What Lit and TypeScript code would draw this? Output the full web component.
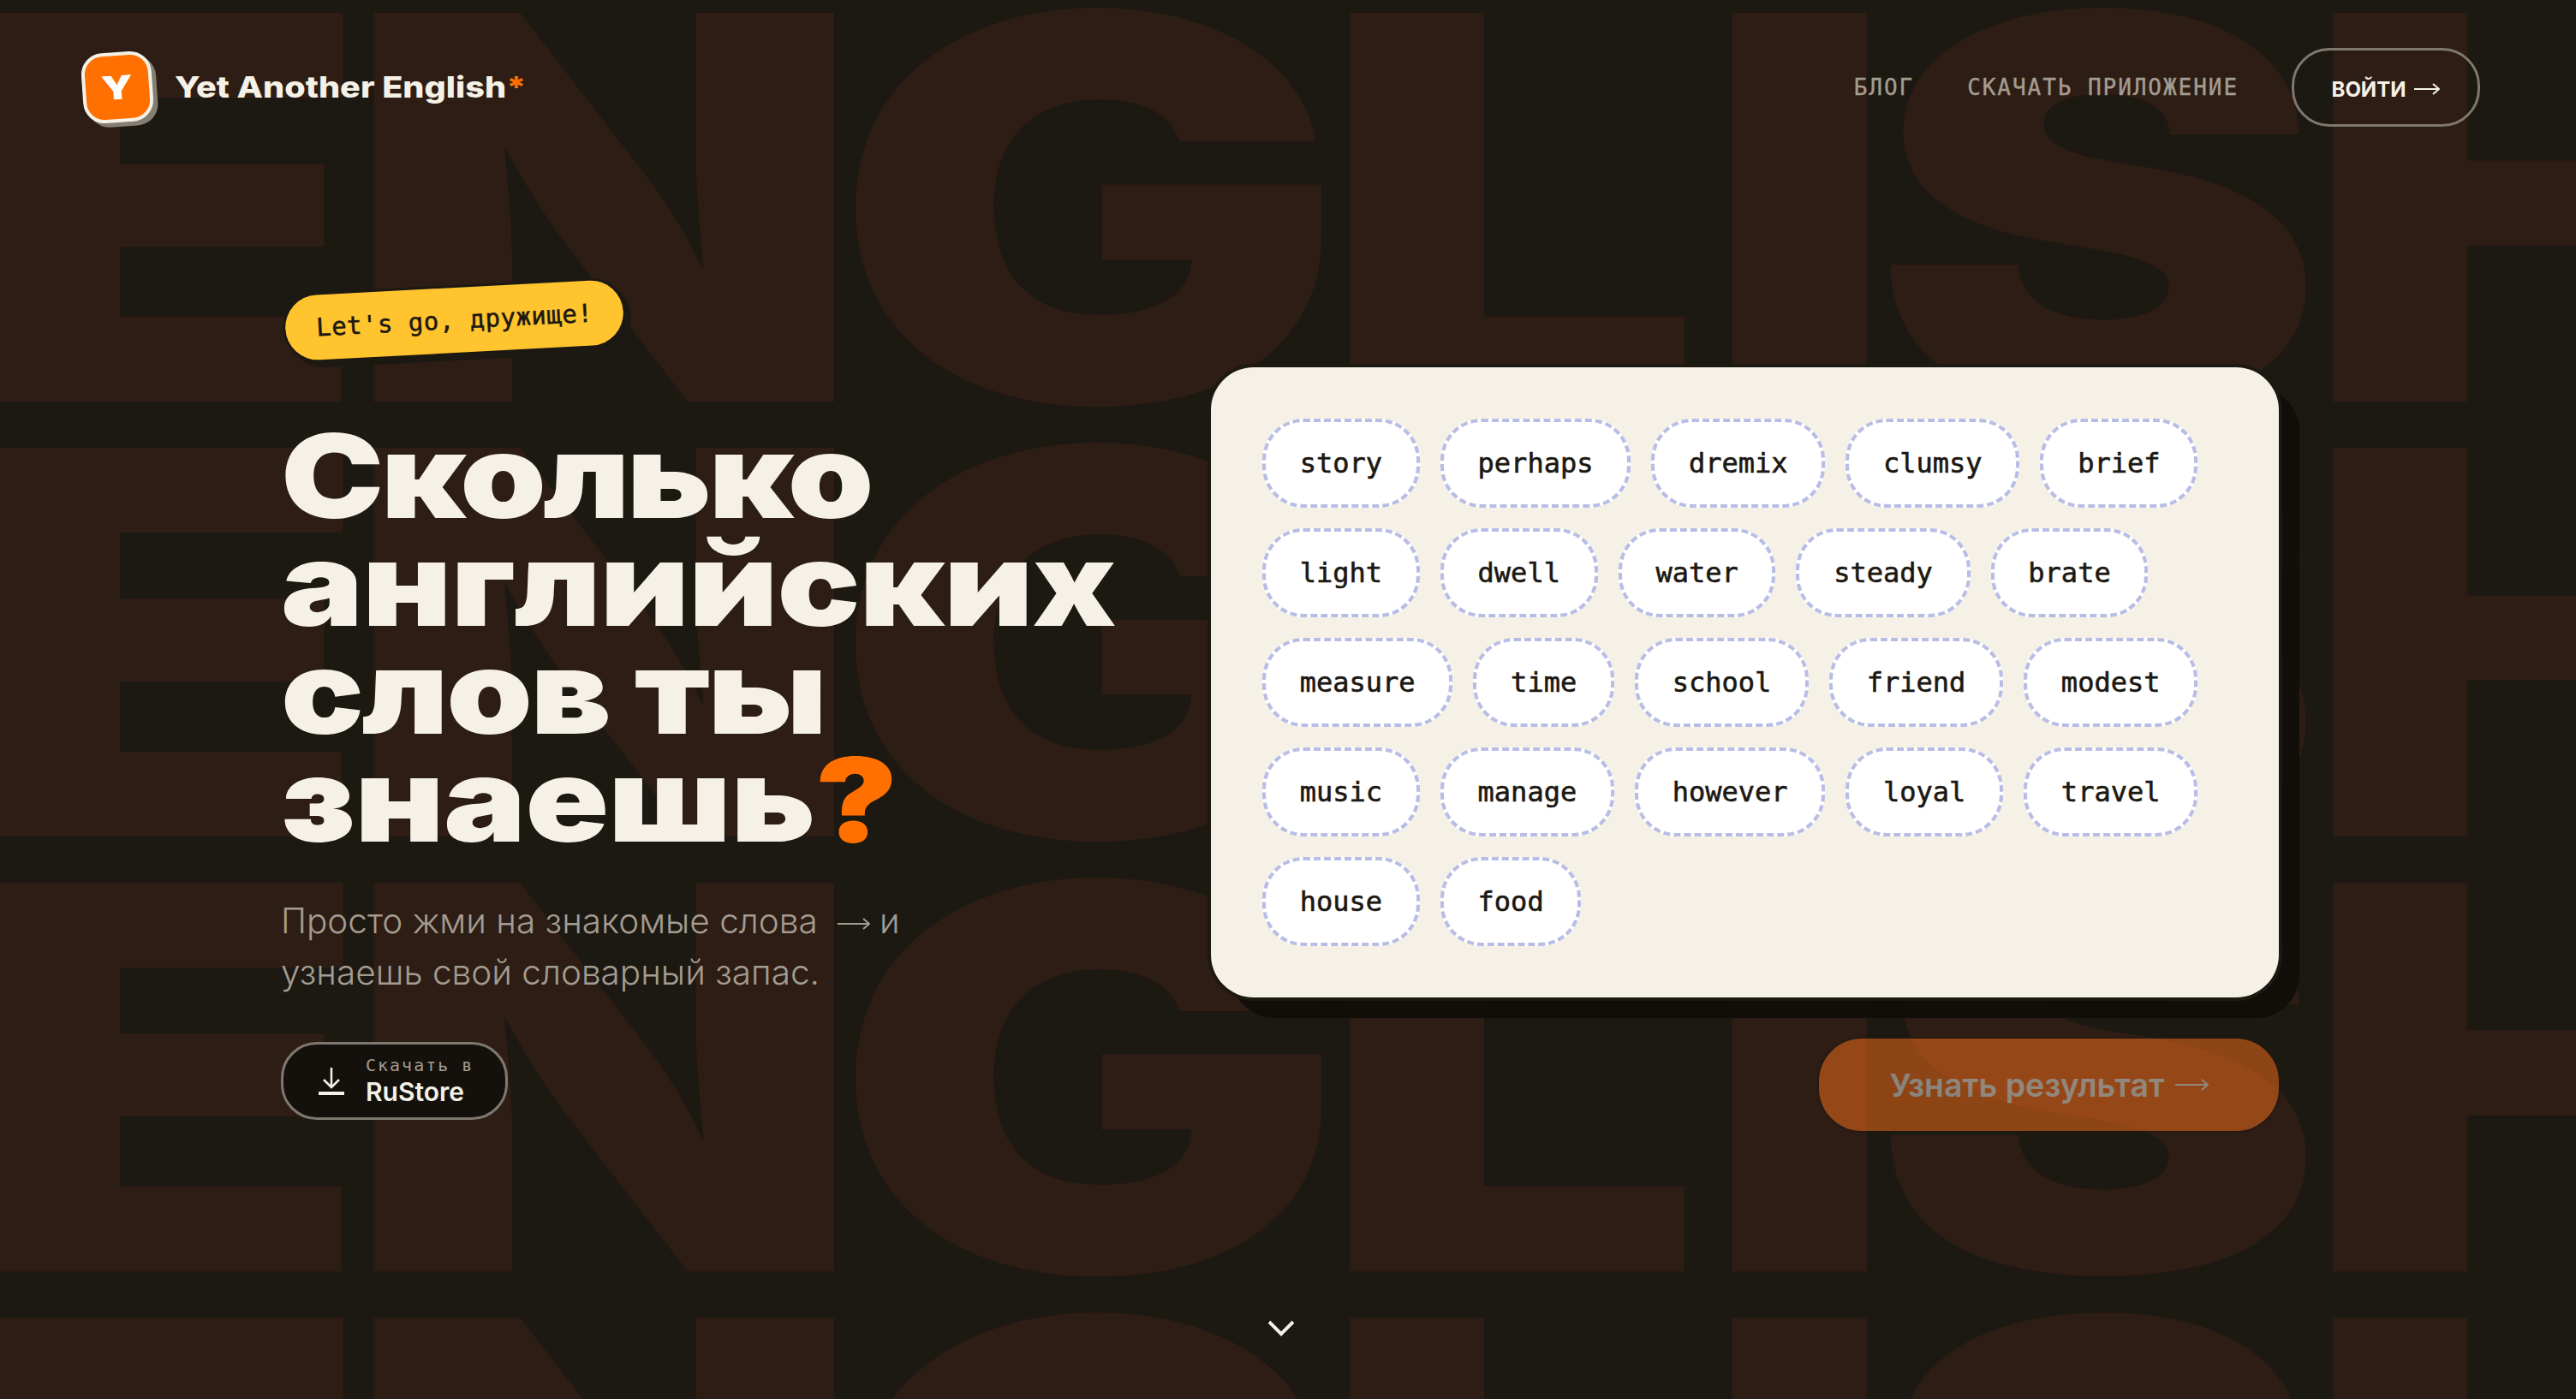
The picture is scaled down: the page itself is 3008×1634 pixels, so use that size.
import { LitElement, html, css, svg } from "lit";
import { customElement } from "lit/decorators.js";

const WORDS = ["story","perhaps","dremix","clumsy","brief","light","dwell","water","steady","brate","measure","time","school","friend","modest","music","manage","however","loyal","travel","house","food"];
const LETTERS: [string, number][] = [["E",-27],["N",-31],["G",-26],["L",-2.5],["I",-25],["S",-22],["H",0]];

const arrow = (w: number, h: number, sw: number) => html`<svg class="arrow" width=${w} height=${h} viewBox="0 0 ${w} ${h}" fill="none" stroke="currentColor" stroke-width=${sw}>${svg`<path d="M0 ${h/2}H${w-1}M${w-8} ${h/2-6}L${w-1} ${h/2}L${w-8} ${h/2+6}"/>`}</svg>`;

@customElement("app-root")
export class AppRoot extends LitElement {
  static styles = css`
    :host { display: block; position: relative; height: 1634px; overflow: hidden; background: #1c1812; color: #f5f1e6; font-family: Inter, "Noto Sans", sans-serif; }
    .bg { position: absolute; inset: 0; overflow: hidden; pointer-events: none; color: #2e1d14; font-weight: 900; font-size: 624px; line-height: 508px; white-space: nowrap; }
    .bg div { position: relative; top: -12px; left: -54px; transform: scaleX(1.275); transform-origin: left; }
    header, main, .chev { position: relative; }
    header { display: flex; justify-content: space-between; align-items: center; padding: 56px 112px 0 96px; height: 92px; }
    .brand { display: flex; align-items: center; gap: 26px; }
    .logo { width: 82px; height: 82px; box-sizing: border-box; border: 4px solid #f5f1e6; border-radius: 25px; background: #ff7000; transform: rotate(-4deg); box-shadow: 5px 5px 0 #857e73; display: flex; align-items: center; justify-content: center; color: #fff; }
    .logo span { display: block; font-weight: 900; font-size: 38px; transform: scaleX(1.25); }
    .name { font-size: 34px; font-weight: 800; margin-bottom: 2px; transform: scaleX(1.165); transform-origin: left; }
    .name i { font-style: normal; color: #ff7000; }
    nav { display: flex; align-items: center; gap: 62px; }
    .mono { font-family: "DejaVu Sans Mono", "Liberation Mono", monospace; }
    nav a { font-size: 26px; letter-spacing: 1.95px; color: #a39c90; -webkit-text-stroke: .4px #a39c90; }
    .login { box-sizing: border-box; width: 220px; height: 92px; border: 3px solid #7e786f; border-radius: 44px; display: flex; align-items: center; justify-content: center; gap: 10px; font-family: Inter, sans-serif; font-size: 24px; font-weight: 700; padding-top: 4px; }
    main { display: flex; padding-left: 328px; }
    .left { width: 1086px; flex: none; }
    .tag { display: inline-block; margin: 188px 0 0 5px; padding: 0 36px; height: 76px; line-height: 76px; border-radius: 38px; background: #ffc42e; color: #1c1812; font-size: 29px; letter-spacing: .5px; transform: rotate(-3deg); box-shadow: 0 0 0 3px #1c1812, 6px 6px 0 3px #1c1812; white-space: nowrap; -webkit-text-stroke: .5px #1c1812; }
    h1 { margin: 81px 0 0; font-size: 136px; line-height: 126px; font-weight: 900; transform: scaleX(1.185); transform-origin: left; letter-spacing: -.7px; }
    h1 span { display: block; white-space: nowrap; }
    h1 .l1 { letter-spacing: -3.1px; }
    h1 .l2 { letter-spacing: -1px; }
    h1 .l3 { letter-spacing: -2.2px; }
    h1 i { font-style: normal; color: #ff7000; }
    p { margin: 49px 0 0; font-size: 40.5px; line-height: 60px; font-weight: 300; color: #a39c90; }
    .arrow { display: inline-block; vertical-align: middle; }
    .store { box-sizing: border-box; margin-top: 51px; width: 265px; height: 91px; background: #14110d; border: 3px solid #7e786f; border-radius: 42px; display: flex; align-items: center; gap: 25px; padding-left: 41px; }
    .store small { display: block; font-size: 20px; line-height: 24px; letter-spacing: 2px; color: #a39c90; }
    .store b { display: block; font-size: 30px; line-height: 38px; font-weight: 600; }
    .right { width: 1247px; padding-top: 281px; display: flex; flex-direction: column; align-items: flex-end; }
    .card { box-sizing: border-box; width: 1247px; height: 736px; padding: 60px; background: #f5f1e6; border-radius: 50px; box-shadow: 0 0 0 4px #1c1812, 24px 24px 0 0 rgba(16,13,9,.9); display: flex; flex-wrap: wrap; gap: 24px; align-content: flex-start; }
    .chip { box-sizing: border-box; height: 104px; padding: 0 39.75px; border: 4px dashed #b8bde6; border-radius: 48px; background: #fff; color: #1c1812; font-size: 32px; line-height: 96px; -webkit-text-stroke: .6px #1c1812; }
    .go { box-sizing: border-box; margin-top: 48px; width: 537px; height: 108px; border-radius: 50px; background: #fe721a; color: #f5f1e6; opacity: .5; display: flex; align-items: center; justify-content: center; gap: 12px; font-size: 37.5px; font-weight: 600; box-shadow: 0 0 0 2px #1c1812; }
    .chev { position: absolute; left: 1481px; top: 1542px; }
  `;

  render() {
    const row = html`<div>${LETTERS.map(([c, ls]) => html`<span style="letter-spacing:${ls}px">${c}</span>`)}</div>`;
    return html`
      <div class="bg">${row}${row}${row}${row}</div>
      <header>
        <div class="brand"><div class="logo"><span>Y</span></div><div class="name">Yet Another English<i>*</i></div></div>
        <nav class="mono">
          <a>БЛОГ</a><a>СКАЧАТЬ ПРИЛОЖЕНИЕ</a>
          <div class="login">ВОЙТИ ${arrow(30, 14, 2)}</div>
        </nav>
      </header>
      <main>
        <div class="left">
          <div class="tag mono">Let's go, дружище!</div>
          <h1><span class="l1">Сколько</span><span class="l2">английских</span><span class="l3">слов ты</span><span>знаешь<i>?</i></span></h1>
          <p>Просто жми на знакомые слова &nbsp;${arrow(38, 14, 2)} и<br>узнаешь свой словарный запас.</p>
          <div class="store">
            <svg width="30" height="32" viewBox="0 0 30 32" fill="none" stroke="#f5f1e6" stroke-width="2.5"><path d="M15 0V22M6 14L15 23L24 14"/><path d="M0 30H30" stroke-width="4"/></svg>
            <div><small class="mono">Скачать в</small><b>RuStore</b></div>
          </div>
        </div>
        <div class="right">
          <div class="card mono">${WORDS.map((w) => html`<div class="chip">${w}</div>`)}</div>
          <div class="go">Узнать результат ${arrow(39, 16, 2)}</div>
        </div>
      </main>
      <svg class="chev" width="30" height="20" viewBox="0 0 30 20" fill="none" stroke="#f5f1e6" stroke-width="4"><path d="M1 2L15 16L29 2"/></svg>
    `;
  }
}
